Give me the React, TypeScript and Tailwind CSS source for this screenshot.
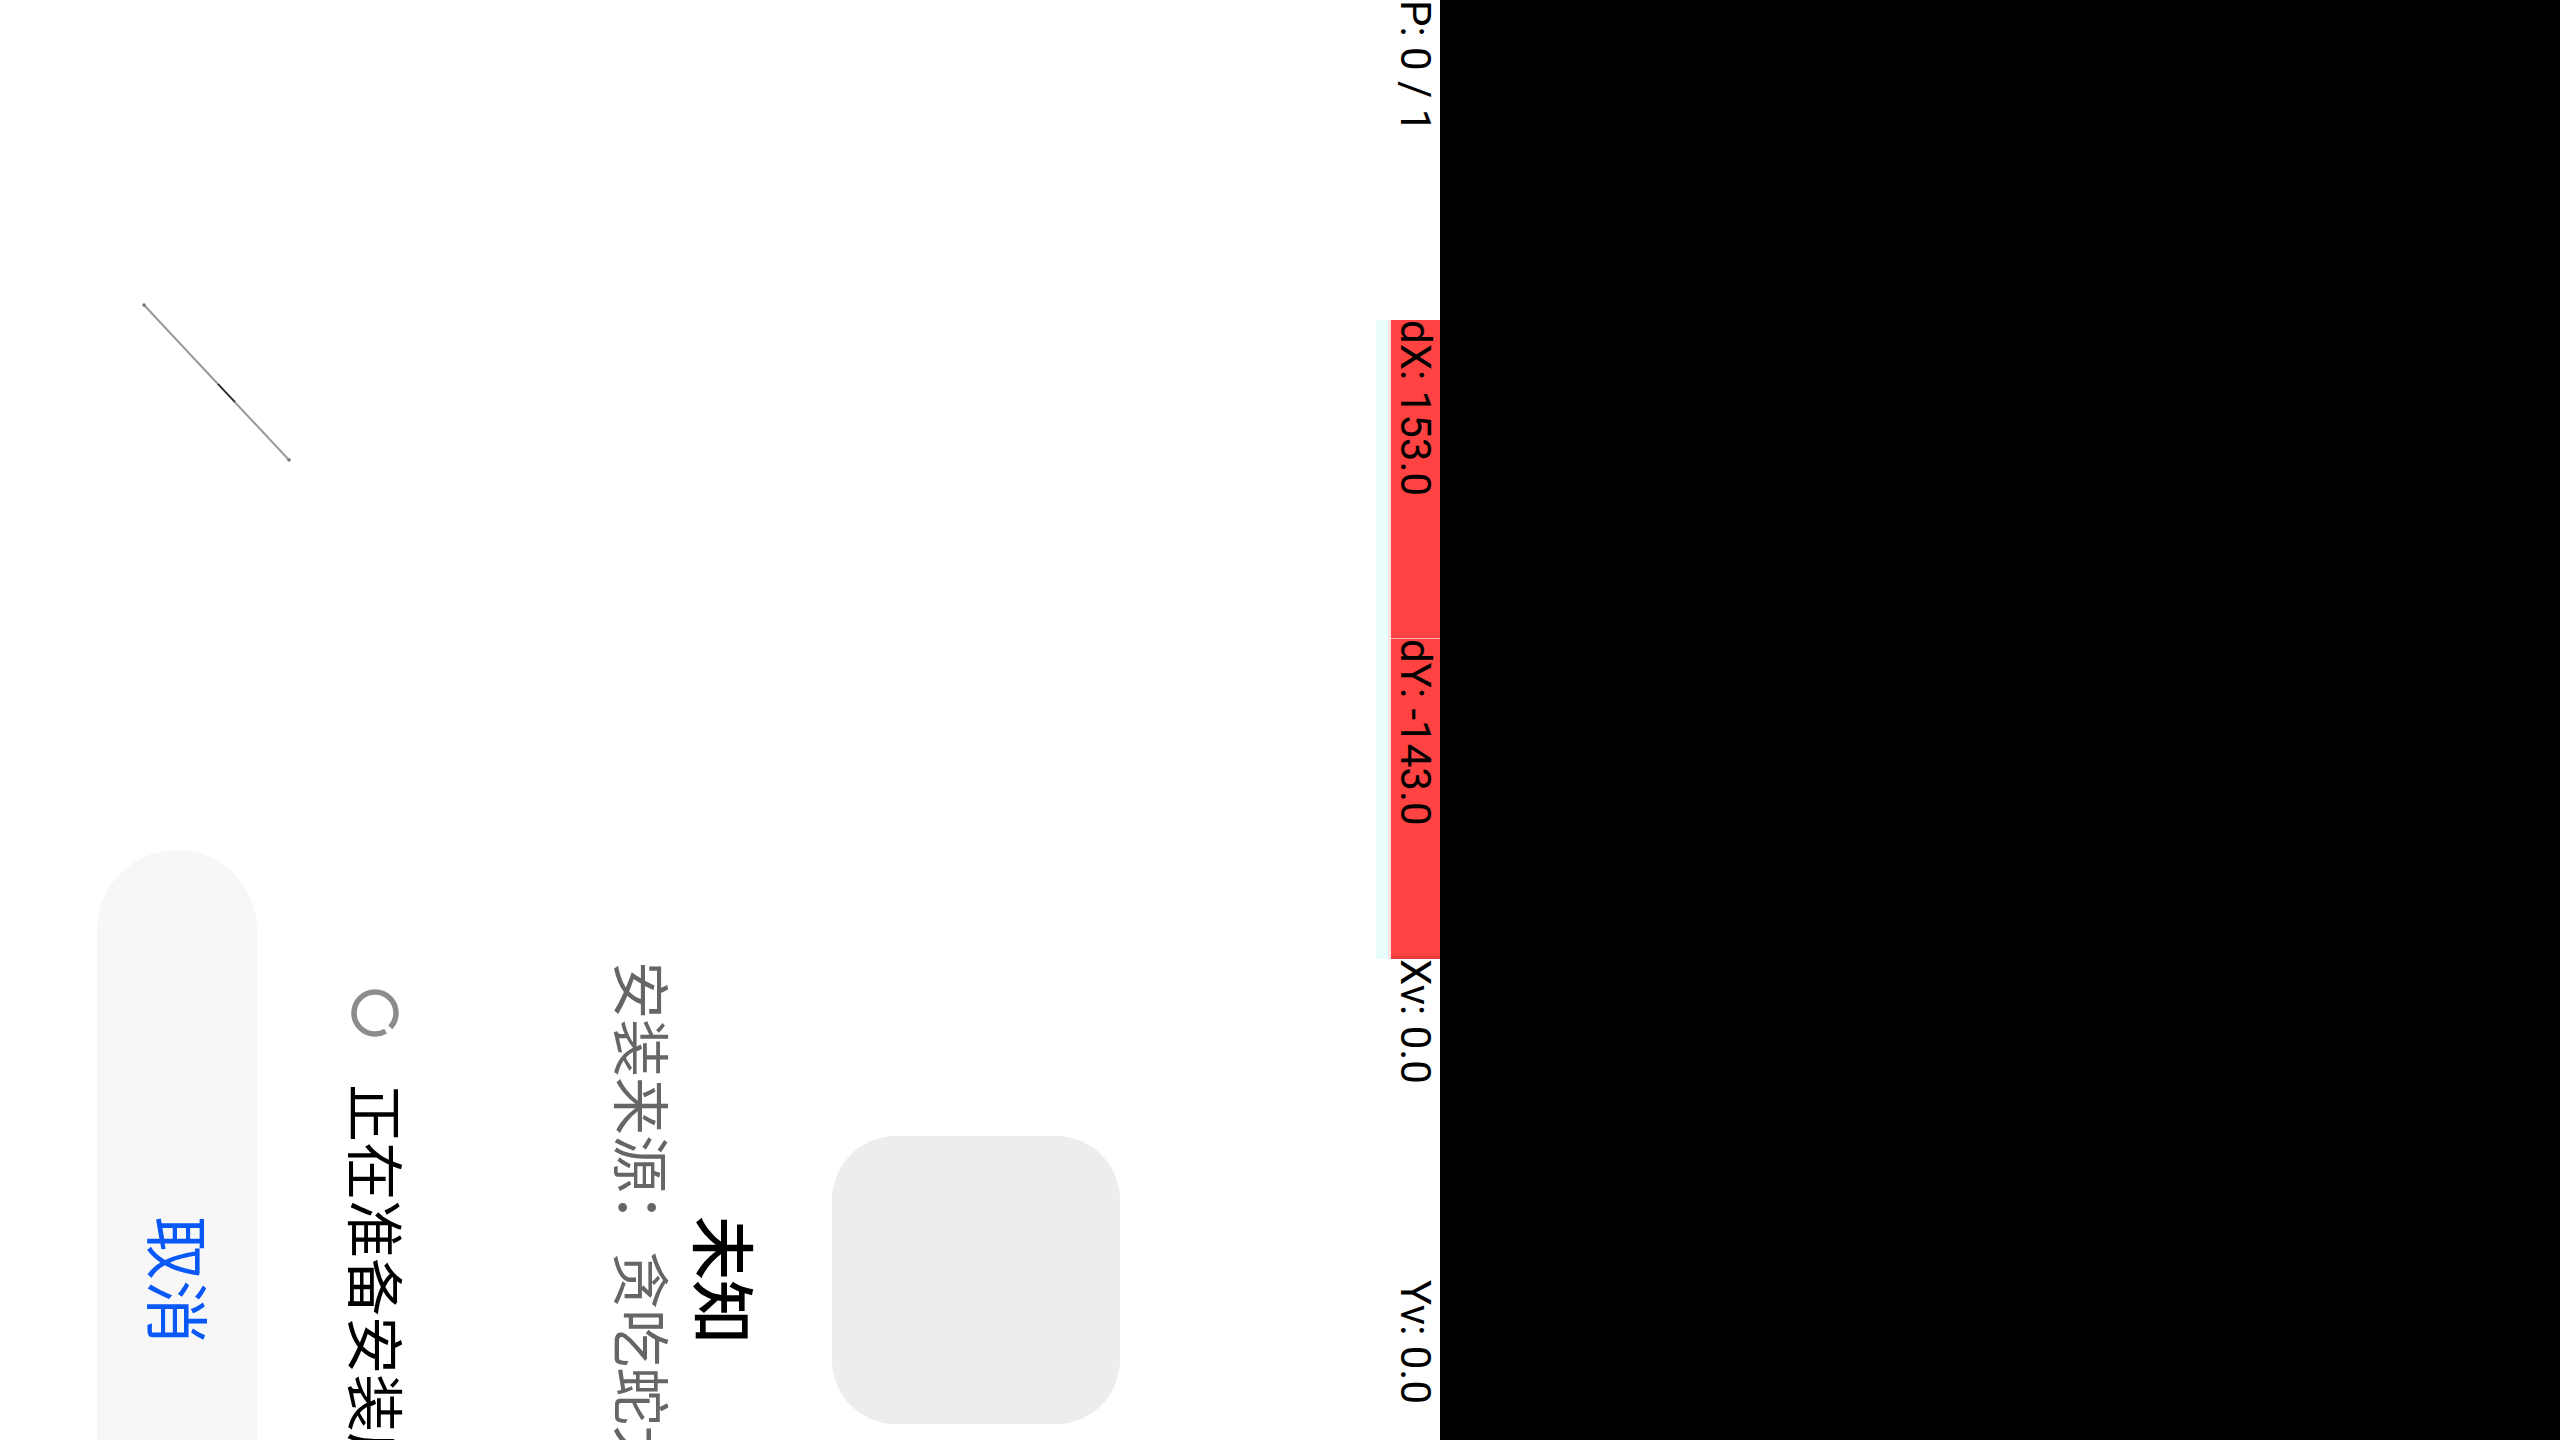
import React from "react";

const cjk = "font-['Roboto','Noto_Sans_CJK_SC',sans-serif]";

function Spinner() {
  return (
    <svg width="50" height="50" viewBox="0 0 50 50" className="shrink-0">
      <circle cx="25" cy="25" r="21" fill="none" stroke="#8c8c8c" strokeWidth="5.5" strokeDasharray="126 6" strokeDashoffset="12" />
    </svg>
  );
}

function Cell({ text, w }: { text: string; w: string }) {
  return (
    <div className={`${w} h-[49px] shrink-0 leading-[49px] text-[42px] text-black whitespace-nowrap font-['Roboto',sans-serif]`}>
      {text}
    </div>
  );
}

export default function App() {
  return (
    <div className="w-[2560px] h-[1440px] bg-black overflow-hidden">
      <div className="relative w-[2560px] h-[1440px] bg-white origin-top-left translate-x-[1440px] rotate-90 flex flex-col">
        {/* pointer location bar */}
        <div className="flex flex-row items-start h-[64px] shrink-0">
          <Cell text="P: 0 / 1" w="w-[320px]" />
          <div className="flex flex-col w-[639px] shrink-0">
            <div className="flex flex-row bg-[#ff4242]">
              <div className="w-[319px] h-[49px] shrink-0 leading-[49px] text-[42px] text-black whitespace-nowrap font-['Roboto',sans-serif] border-r border-[#ffb0b0]">
                dX: 153.0
              </div>
              <div className="w-[320px] h-[49px] shrink-0 leading-[49px] text-[42px] text-black whitespace-nowrap font-['Roboto',sans-serif] border-r-[3px] border-[#e83a3a]">
                dY: -143.0
              </div>
            </div>
            <div className="h-[3px] bg-[#fbe3e3]" />
            <div className="h-[12px] bg-[#eafdfd]" />
          </div>
          <Cell text="Xv: 0.0" w="w-[321px]" />
          <Cell text="Yv: 0.0" w="w-[320px]" />
          <Cell text="Prs: 0.00" w="w-[320px]" />
          <Cell text="Size: 0.00" w="w-[320px]" />
        </div>

        {/* install dialog content */}
        <div className="flex flex-col items-center pt-[256px]">
          <div className="w-[288px] h-[288px] rounded-[64px] bg-[#ededed] shrink-0" />
          <div className={`mt-[80px] text-[64px] leading-[64px] font-medium text-black whitespace-nowrap ${cjk}`}>未知</div>
          <div className={`mt-[20px] text-[58px] leading-[58px] text-[#666666] whitespace-nowrap ${cjk}`}>安装来源：贪吃蛇大作战</div>
          <div className="mt-[206px] flex flex-row items-center gap-[46px] h-[58px]">
            <Spinner />
            <div className={`w-[488px] pt-[4px] text-[58px] leading-[58px] text-black whitespace-nowrap ${cjk}`}>正在准备安装应用…</div>
          </div>
          <button className="mt-[89px] w-[860px] h-[160px] rounded-full bg-[#f7f7f7] flex items-center justify-center">
            <span className={`pt-[6px] text-[64px] leading-[64px] text-[#0a59f7] ${cjk}`}>取消</span>
          </button>
        </div>

        {/* pointer trace */}
        <svg className="absolute left-0 top-0 pointer-events-none" width="2560" height="1440" viewBox="0 0 2560 1440">
          <line x1="305" y1="1296" x2="460" y2="1151" stroke="#9a9a9a" strokeWidth="2" strokeLinecap="round" />
          <line x1="384" y1="1222" x2="402" y2="1205" stroke="#222222" strokeWidth="1.5" />
          <circle cx="305" cy="1296" r="1.8" fill="#777" />
          <circle cx="460" cy="1151" r="1.8" fill="#777" />
        </svg>
      </div>
    </div>
  );
}
